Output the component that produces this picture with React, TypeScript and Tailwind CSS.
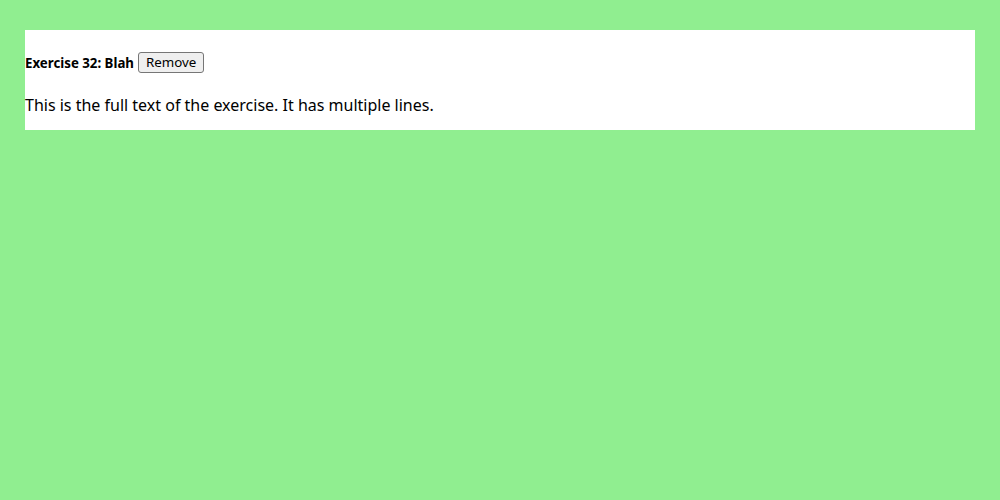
export default function App() {
  return (
    <div className="min-h-screen w-full bg-[#90ee90] px-[25px] pt-[30px] font-['Noto_Sans',sans-serif] text-black">
      <div className="bg-white pt-[22px] pb-[14px]">
        {/* Header row */}
        <div className="flex items-center gap-[4px]">
          <h5 className="text-[13.28px] font-bold leading-[20px]">Exercise 32: Blah</h5>
          <button className="h-[21px] rounded-[3px] border border-[#767676] bg-[#efefef] px-[7px] text-[13.33px] leading-[17px] text-black">
            Remove
          </button>
        </div>

        {/* Exercise body */}
        <p className="mt-[21px] text-[16px] leading-[22px]">
          This is the full text of the exercise. It has multiple lines.
        </p>
      </div>
    </div>
  );
}
